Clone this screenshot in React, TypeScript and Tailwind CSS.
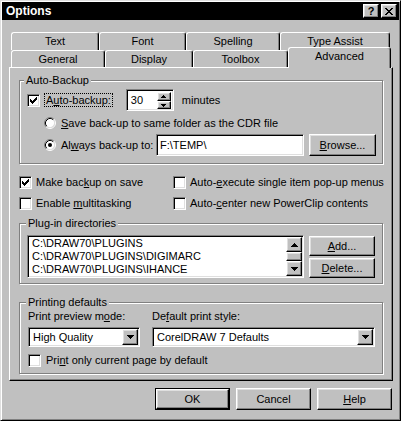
import React from 'react';

// win95 bevels
const raised =
  'border border-t-white border-l-white border-r-black border-b-black shadow-[inset_-1px_-1px_0_#808080,inset_1px_1px_0_#dfdfdf]';
const sunken =
  'border border-t-[#808080] border-l-[#808080] border-r-white border-b-white shadow-[inset_1px_1px_0_#000,inset_-1px_-1px_0_#dfdfdf]';
const etched = 'border border-[#808080] shadow-[inset_1px_1px_0_#fff,1px_1px_0_#fff]';

const CHECK =
  'M6 0h1v1H6z M5 1h2v1H5z M0 2h1v1H0z M4 2h3v1H4z M0 3h2v1H0z M3 3h3v1H3z M0 4h5v1H0z M1 5h3v1H1z M2 6h1v1H2z';
const CLOSE =
  'M0 0h2v1H0z M6 0h2v1H6z M1 1h2v1H1z M5 1h2v1H5z M2 2h4v1H2z M3 3h2v1H3z M2 4h4v1H2z M1 5h2v1H1z M5 5h2v1H5z M0 6h2v1H0z M6 6h2v1H6z';

const Check = ({ on }: { on?: boolean }) => (
  <span className={`flex h-[13px] w-[13px] shrink-0 items-center justify-center bg-white ${sunken}`}>
    {on && (
      <svg width="7" height="7" viewBox="0 0 7 7" shapeRendering="crispEdges">
        <path d={CHECK} fill="#000" />
      </svg>
    )}
  </span>
);

const Radio = ({ on }: { on?: boolean }) => (
  <svg width="12" height="12" viewBox="0 0 12 12" className="shrink-0">
    <circle cx="6" cy="6" r="4.5" fill="#fff" />
    <path d="M2.11 9.89A5.5 5.5 0 0 1 9.89 2.11" stroke="#808080" fill="none" />
    <path d="M9.89 2.11A5.5 5.5 0 0 1 2.11 9.89" stroke="#fff" fill="none" />
    <path d="M2.82 9.18A4.5 4.5 0 0 1 9.18 2.82" stroke="#000" fill="none" />
    <path d="M9.18 2.82A4.5 4.5 0 0 1 2.82 9.18" stroke="#dfdfdf" fill="none" />
    {on && <circle cx="6" cy="6" r="2" fill="#000" />}
  </svg>
);

const ArrowUp = () => (
  <svg width="7" height="4" viewBox="0 0 7 4" shapeRendering="crispEdges">
    <path d="M3 0h1v1h1v1h1v1h1v1H0V3h1V2h1V1h1z" fill="#000" />
  </svg>
);

const ArrowDown = () => (
  <svg width="7" height="4" viewBox="0 0 7 4" shapeRendering="crispEdges">
    <path d="M0 0h7v1H6v1H5v1H4v1H3V3H2V2H1V1H0z" fill="#000" />
  </svg>
);

const Tab = ({ label, w, active }: { label: string; w: string; active?: boolean }) => (
  <div
    className={`flex shrink-0 items-center justify-center rounded-t-[3px] border-t border-l border-r border-t-white border-l-white border-r-black bg-[#c0c0c0] shadow-[inset_-1px_0_0_#808080] ${w} ${
      active ? 'relative z-10 -mb-px h-[21px] pb-[3px]' : 'h-full'
    }`}
  >
    {label}
  </div>
);

const Button = ({ children, w, h }: { children: React.ReactNode; w: string; h: string }) => (
  <div className={`flex items-center justify-center bg-[#c0c0c0] ${raised} ${w} ${h}`}>{children}</div>
);

const Combo = ({ value, w }: { value: string; w: string }) => (
  <div className={`flex h-[20px] bg-white p-[1px] ${sunken} ${w}`}>
    <div className="flex flex-1 items-center pl-[3px]">{value}</div>
    <div className={`flex h-[16px] w-[16px] items-center justify-center bg-[#c0c0c0] ${raised}`}>
      <ArrowDown />
    </div>
  </div>
);

const dirs = ['C:\\DRAW70\\PLUGINS', 'C:\\DRAW70\\PLUGINS\\DIGIMARC', 'C:\\DRAW70\\PLUGINS\\IHANCE'];

export default function App() {
  return (
    <div className="h-[421px] w-[401px] bg-[#c0c0c0] font-['Liberation_Sans',Arial,sans-serif] text-[11px] leading-[13px] text-black">
      <div className="flex h-full w-full flex-col border border-t-[#dfdfdf] border-l-[#dfdfdf] border-r-black border-b-black p-[1px] shadow-[inset_1px_1px_0_#fff,inset_-1px_-1px_0_#808080]">
        {/* title bar */}
        <div className="flex h-[18px] items-center bg-black pl-[4px] pr-[2px]">
          <span className="flex-1 text-[12px] font-bold text-white">Options</span>
          <div className={`flex h-[14px] w-[16px] items-center justify-center bg-[#c0c0c0] text-[11px] font-bold leading-none ${raised}`}>
            ?
          </div>
          <div className={`ml-[2px] flex h-[14px] w-[16px] items-center justify-center bg-[#c0c0c0] ${raised}`}>
            <svg width="8" height="7" viewBox="0 0 8 7" shapeRendering="crispEdges">
              <path d={CLOSE} fill="#000" />
            </svg>
          </div>
        </div>

        <div className="ml-[7px] mt-[12px] w-[384px]">
          {/* tabs */}
          <div className="flex h-[18px] pl-[2px]">
            <Tab label="Text" w="w-[88px]" />
            <Tab label="Font" w="w-[87px]" />
            <Tab label="Spelling" w="w-[94px]" />
            <Tab label="Type Assist" w="w-[110px]" />
          </div>
          <div className="flex h-[17px] items-end pl-[2px]">
            <Tab label="General" w="w-[94px]" />
            <Tab label="Display" w="w-[88px]" />
            <Tab label="Toolbox" w="w-[95px]" />
            <Tab label="Advanced" w="w-[103px]" active />
          </div>

          {/* panel */}
          <div className="h-[314px] border border-t-white border-l-white border-r-black border-b-black px-[9px] pt-[6px] shadow-[inset_-1px_-1px_0_#808080]">
            <fieldset className={etched}>
              <legend className="ml-[4px] bg-[#c0c0c0] px-[2px] leading-[13px]">Auto-Backup</legend>
              <div className="pb-[7px] pl-[7px] pr-[6px] pt-[2px]">
                <div className="flex h-[22px] items-center">
                  <Check on />
                  <span className="ml-[4px] border border-dotted border-black px-[1px] leading-[12px]">
                    A<span className="underline">u</span>to-backup:
                  </span>
                  <div className={`ml-[13px] flex h-[22px] w-[48px] bg-white p-[1px] ${sunken}`}>
                    <div className="flex flex-1 items-center pl-[3px]">30</div>
                    <div className="flex w-[15px] flex-col pr-[1px] pt-[1px]">
                      <div className={`flex h-[9px] items-center justify-center bg-[#c0c0c0] ${raised}`}>
                        <svg width="5" height="3" viewBox="0 0 5 3" shapeRendering="crispEdges">
                          <path d="M2 0h1v1h1v1h1v1H0V2h1V1h1z" fill="#000" />
                        </svg>
                      </div>
                      <div className={`flex h-[8px] items-center justify-center bg-[#c0c0c0] ${raised}`}>
                        <svg width="5" height="3" viewBox="0 0 5 3" shapeRendering="crispEdges">
                          <path d="M0 0h5v1H4v1H3v1H2V2H1V1H0z" fill="#000" />
                        </svg>
                      </div>
                    </div>
                  </div>
                  <span className="ml-[8px]">minutes</span>
                </div>
                <div className="mt-[3px] flex h-[18px] items-center pl-[17px]">
                  <Radio />
                  <span className="ml-[5px]">
                    <span className="underline">S</span>ave back-up to same folder as the CDR file
                  </span>
                </div>
                <div className="mt-[2px] flex h-[22px] items-center pl-[17px]">
                  <Radio on />
                  <span className="ml-[5px] w-[95px]">
                    Al<span className="underline">w</span>ays back-up to:
                  </span>
                  <div className={`flex h-[22px] w-[148px] items-center bg-white p-[1px] pl-[3px] ${sunken}`}>F:\TEMP\</div>
                  <div className="ml-[5px]">
                    <Button w="w-[67px]" h="h-[22px]">
                      <span>
                        <span className="underline">B</span>rowse...
                      </span>
                    </Button>
                  </div>
                </div>
              </div>
            </fieldset>

            <div className="mt-[8px] grid grid-cols-[154px_1fr] whitespace-nowrap">
              <div className="flex h-[21px] items-center">
                <Check on />
                <span className="ml-[4px]">
                  Make bac<span className="underline">k</span>up on save
                </span>
              </div>
              <div className="flex h-[21px] items-center">
                <Check />
                <span className="ml-[4px]">
                  Auto-<span className="underline">e</span>xecute single item pop-up menus
                </span>
              </div>
              <div className="flex h-[21px] items-center">
                <Check />
                <span className="ml-[4px]">
                  Enable <span className="underline">m</span>ultitasking
                </span>
              </div>
              <div className="flex h-[21px] items-center">
                <Check />
                <span className="ml-[4px]">
                  Auto-<span className="underline">c</span>enter new PowerClip contents
                </span>
              </div>
            </div>

            <fieldset className={`mt-[3px] ${etched}`}>
              <legend className="ml-[6px] bg-[#c0c0c0] px-[2px] leading-[13px]">Plug-in directories</legend>
              <div className="flex pb-[5px] pl-[7px] pt-[5px]">
                <div className={`flex h-[43px] w-[277px] bg-white p-[1px] ${sunken}`}>
                  <div className="flex-1 pl-[3px]">
                    {dirs.map((d) => (
                      <div key={d} className="h-[13px] leading-[13px]">
                        {d}
                      </div>
                    ))}
                  </div>
                  <div className="flex w-[16px] flex-col">
                    <div className={`flex h-[15px] items-center justify-center bg-[#c0c0c0] ${raised}`}>
                      <ArrowUp />
                    </div>
                    <div className={`h-[9px] bg-[#c0c0c0] ${raised}`} />
                    <div className={`flex h-[15px] items-center justify-center bg-[#c0c0c0] ${raised}`}>
                      <ArrowDown />
                    </div>
                  </div>
                </div>
                <div className="ml-[5px] flex flex-col gap-[2px] pt-[1px]">
                  <Button w="w-[66px]" h="h-[20px]">
                    <span>
                      <span className="underline">A</span>dd...
                    </span>
                  </Button>
                  <Button w="w-[66px]" h="h-[20px]">
                    <span>
                      <span className="underline">D</span>elete...
                    </span>
                  </Button>
                </div>
              </div>
            </fieldset>

            <fieldset className={`mt-[12px] ${etched}`}>
              <legend className="ml-[6px] bg-[#c0c0c0] px-[2px] leading-[13px]">Printing defaults</legend>
              <div className="pb-[6px] pl-[8px] pt-[1px]">
                <div className="grid grid-cols-[124px_223px]">
                  <span>
                    Print preview m<span className="underline">o</span>de:
                  </span>
                  <span>
                    De<span className="underline">f</span>ault print style:
                  </span>
                  <div className="mt-[4px]">
                    <Combo value="High Quality" w="w-[112px]" />
                  </div>
                  <div className="mt-[4px]">
                    <Combo value="CorelDRAW 7 Defaults" w="w-[223px]" />
                  </div>
                </div>
                <div className="mt-[7px] flex h-[13px] items-center">
                  <Check />
                  <span className="ml-[5px]">
                    Pri<span className="underline">n</span>t only current page by default
                  </span>
                </div>
              </div>
            </fieldset>
          </div>
        </div>

        {/* dialog buttons */}
        <div className="mt-[7px] flex justify-end gap-[6px] pr-[7px]">
          <div className="h-[22px] w-[75px] border border-black">
            <Button w="w-full" h="h-full">
              OK
            </Button>
          </div>
          <Button w="w-[75px]" h="h-[22px]">
            Cancel
          </Button>
          <Button w="w-[75px]" h="h-[22px]">
            <span>
              <span className="underline">H</span>elp
            </span>
          </Button>
        </div>
      </div>
    </div>
  );
}
